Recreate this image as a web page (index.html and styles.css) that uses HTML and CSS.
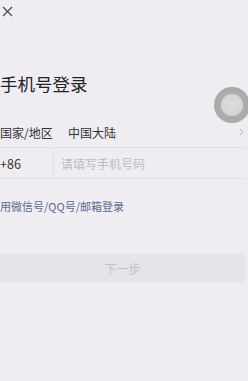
FILE: index.html
```html
<!DOCTYPE html>
<html lang="zh">
<head>
<meta charset="utf-8">
<link rel="stylesheet" href="styles.css">
</head>
<body>
<div class="page">
  <div class="topbar">
    <svg class="close" width="11" height="11" viewBox="0 0 11 11"><path d="M1 1 L10 10 M10 1 L1 10" stroke="#4a4a4e" stroke-width="1.2" fill="none"/></svg>
  </div>
  <h1 class="title">手机号登录</h1>
  <div class="row region">
    <span class="label">国家/地区</span>
    <span class="value">中国大陆</span>
    <svg class="chev" width="5" height="8" viewBox="0 0 5 8"><path d="M0.8 0.8 L4 4 L0.8 7.2" stroke="#b4b3b8" stroke-width="1" fill="none"/></svg>
  </div>
  <div class="row phone">
    <span class="code">+86</span>
    <span class="placeholder">请填写手机号码</span>
  </div>
  <div class="alt">用微信号/QQ号/邮箱登录</div>
  <div class="btn">下一步</div>
  <div class="assist"><div class="assist-inner"></div></div>
</div>
</body>
</html>
```
FILE: styles.css
```css
html, body {
  margin: 0;
  padding: 0;
  background: #efedf1;
}
body {
  font-family: "Noto Sans CJK SC", "Noto Sans", sans-serif;
  color: #2b2b2e;
  width: 248px;
  height: 381px;
  overflow: hidden;
}
.page {
  position: relative;
  height: 381px;
}
.topbar {
  height: 20px;
  padding: 6px 0 0 2px;
  box-sizing: border-box;
}
.close {
  display: block;
}
.title {
  margin: 52px 0 0 0;
  font-size: 17.5px;
  font-weight: 400;
  line-height: 24px;
  color: #222225;
  letter-spacing: 0;
}
.row {
  display: flex;
  align-items: center;
  height: 30px;
  border-bottom: 1px solid #e0dfe3;
  margin-right: 3px;
  font-size: 12px;
}
.region {
  margin-top: 21px;
}
.label {
  width: 68px;
  color: #333336;
}
.value {
  flex: 1;
  color: #333336;
}
.chev {
  margin-right: 1px;
}
.code {
  width: 54px;
  height: 100%;
  display: flex;
  align-items: center;
  border-right: 1px solid #e0dfe3;
  color: #333336;
  font-size: 12.5px;
  box-sizing: border-box;
}
.placeholder {
  margin-left: 7px;
  color: #bdbcc1;
}
.alt {
  margin-top: 19px;
  font-size: 11px;
  line-height: 16px;
  color: #5d6b8e;
}
.btn {
  margin: 39px 3px 0 0;
  height: 30px;
  border-radius: 4px;
  background: #e5e4e8;
  color: #c3c2c7;
  font-size: 12px;
  display: flex;
  align-items: center;
  justify-content: center;
}
.assist {
  position: absolute;
  left: 214px;
  top: 87px;
  width: 36px;
  height: 36px;
  border-radius: 50%;
  background: radial-gradient(circle at 50% 50%, #b8b8b8 0, #a9a9a9 70%, #b4b4b4 100%);
  display: flex;
  align-items: center;
  justify-content: center;
}
.assist-inner {
  width: 22px;
  height: 22px;
  border-radius: 50%;
  background: radial-gradient(circle, #dcdcdc 0, #d4d4d4 70%, #c6c6c6 100%);
}
```
